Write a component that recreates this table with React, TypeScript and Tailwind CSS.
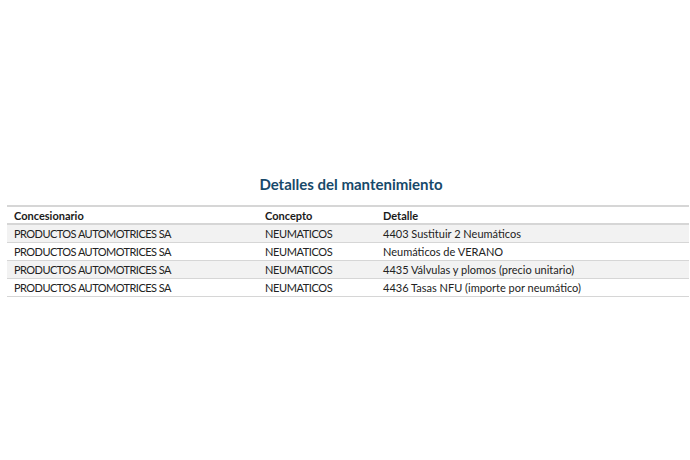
import React from "react";

const rows = [
  ["PRODUCTOS AUTOMOTRICES SA", "NEUMATICOS", "4403 Sustituir 2 Neumáticos"],
  ["PRODUCTOS AUTOMOTRICES SA", "NEUMATICOS", "Neumáticos de VERANO"],
  ["PRODUCTOS AUTOMOTRICES SA", "NEUMATICOS", "4435 Válvulas y plomos (precio unitario)"],
  ["PRODUCTOS AUTOMOTRICES SA", "NEUMATICOS", "4436 Tasas NFU (importe por neumático)"],
];

export default function App() {
  return (
    <div
      className="w-[690px] h-[460px] bg-white pt-[173px] pl-[7px] pr-[1px]"
      style={{ fontFamily: "Lato, 'Noto Sans', sans-serif" }}
    >
      <h1 className="text-center text-[15px] font-bold text-[#17496a] leading-[22px] mb-[10px] pl-[6px]">
        Detalles del mantenimiento
      </h1>
      <div className="border-t-2 border-[#d6d6d6]">
        <div className="grid grid-cols-[251px_118px_1fr] h-[18px] items-center text-[11px] font-bold text-[#1a1a1a] border-b-2 border-[#d6d6d6] px-[7px] leading-none">
          <div>Concesionario</div>
          <div>Concepto</div>
          <div>Detalle</div>
        </div>
        {rows.map((r, i) => (
          <div
            key={i}
            className={`grid grid-cols-[251px_118px_1fr] h-[18px] items-center text-[11px] text-[#222] border-b border-[#d6d6d6] px-[7px] leading-none ${
              i % 2 === 0 ? "bg-[#f2f2f2]" : "bg-white"
            }`}
          >
            <div className="tracking-[-0.55px]">{r[0]}</div>
            <div className="tracking-[-0.4px]">{r[1]}</div>
            <div>{r[2]}</div>
          </div>
        ))}
      </div>
    </div>
  );
}
